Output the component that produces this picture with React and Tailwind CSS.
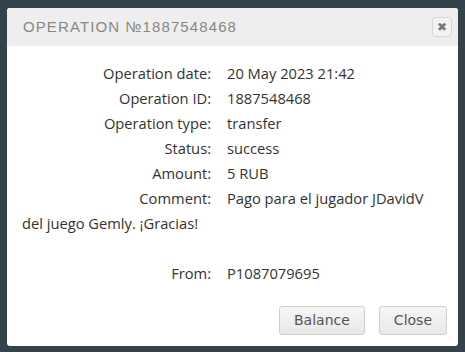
export default function App() {
  const rows = [
    ["Operation date:", "20 May 2023 21:42"],
    ["Operation ID:", "1887548468"],
    ["Operation type:", "transfer"],
    ["Status:", "success"],
    ["Amount:", "5 RUB"],
  ];

  return (
    <div className="w-[465px] h-[352px] bg-[#34424b] pt-[8px] pl-[7px]">
      <div className="w-[451px] h-[338px] bg-white rounded-[3px] flex flex-col overflow-hidden">
        <div className="h-[38px] bg-[#eeeeee] flex items-center justify-between pl-[16px] pr-[6px] shrink-0">
          <span
            className="text-[15px] tracking-[1.1px] text-[#8b8782] font-medium"
            style={{ fontFamily: "'Liberation Sans', sans-serif" }}
          >
            OPERATION №1887548468
          </span>
          <button
            type="button"
            className="w-[20px] h-[20px] border border-[#d6d6d6] rounded-[3px] bg-[#f2f2f2] flex items-center justify-center text-[#777] text-[12px] leading-none"
            style={{ fontFamily: "'DejaVu Sans', sans-serif" }}
          >
            ✖
          </button>
        </div>

        <div
          className="flex-1 px-[15px] pt-[15px] text-[14.7px] leading-[25px] text-[#333]"
          style={{ fontFamily: "'Open Sans', sans-serif" }}
        >
          {rows.map(([label, value]) => (
            <div key={label} className="flex">
              <span className="w-[205px] text-right pr-[16px] shrink-0">{label}</span>
              <span>{value}</span>
            </div>
          ))}
          <p>
            <span className="inline-block w-[205px] text-right pr-[16px]">Comment:</span>
            <span>Pago para el jugador JDavidV</span> <span>del juego Gemly. ¡Gracias!</span>
          </p>
          <div className="h-[25px]" />
          <div className="flex">
            <span className="w-[205px] text-right pr-[16px] shrink-0">From:</span>
            <span>P1087079695</span>
          </div>
        </div>

        <div
          className="flex justify-end gap-[14px] pr-[11px] pb-[11px] text-[14px] text-[#555]"
          style={{ fontFamily: "'DejaVu Sans', sans-serif" }}
        >
          <button
            type="button"
            className="h-[29px] px-[14px] border border-[#cfcfcf] rounded-[3px] bg-gradient-to-b from-[#f6f6f6] to-[#e8e8e8]"
          >
            Balance
          </button>
          <button
            type="button"
            className="h-[29px] px-[14px] border border-[#cfcfcf] rounded-[3px] bg-gradient-to-b from-[#f6f6f6] to-[#e8e8e8]"
          >
            Close
          </button>
        </div>
      </div>
    </div>
  );
}
